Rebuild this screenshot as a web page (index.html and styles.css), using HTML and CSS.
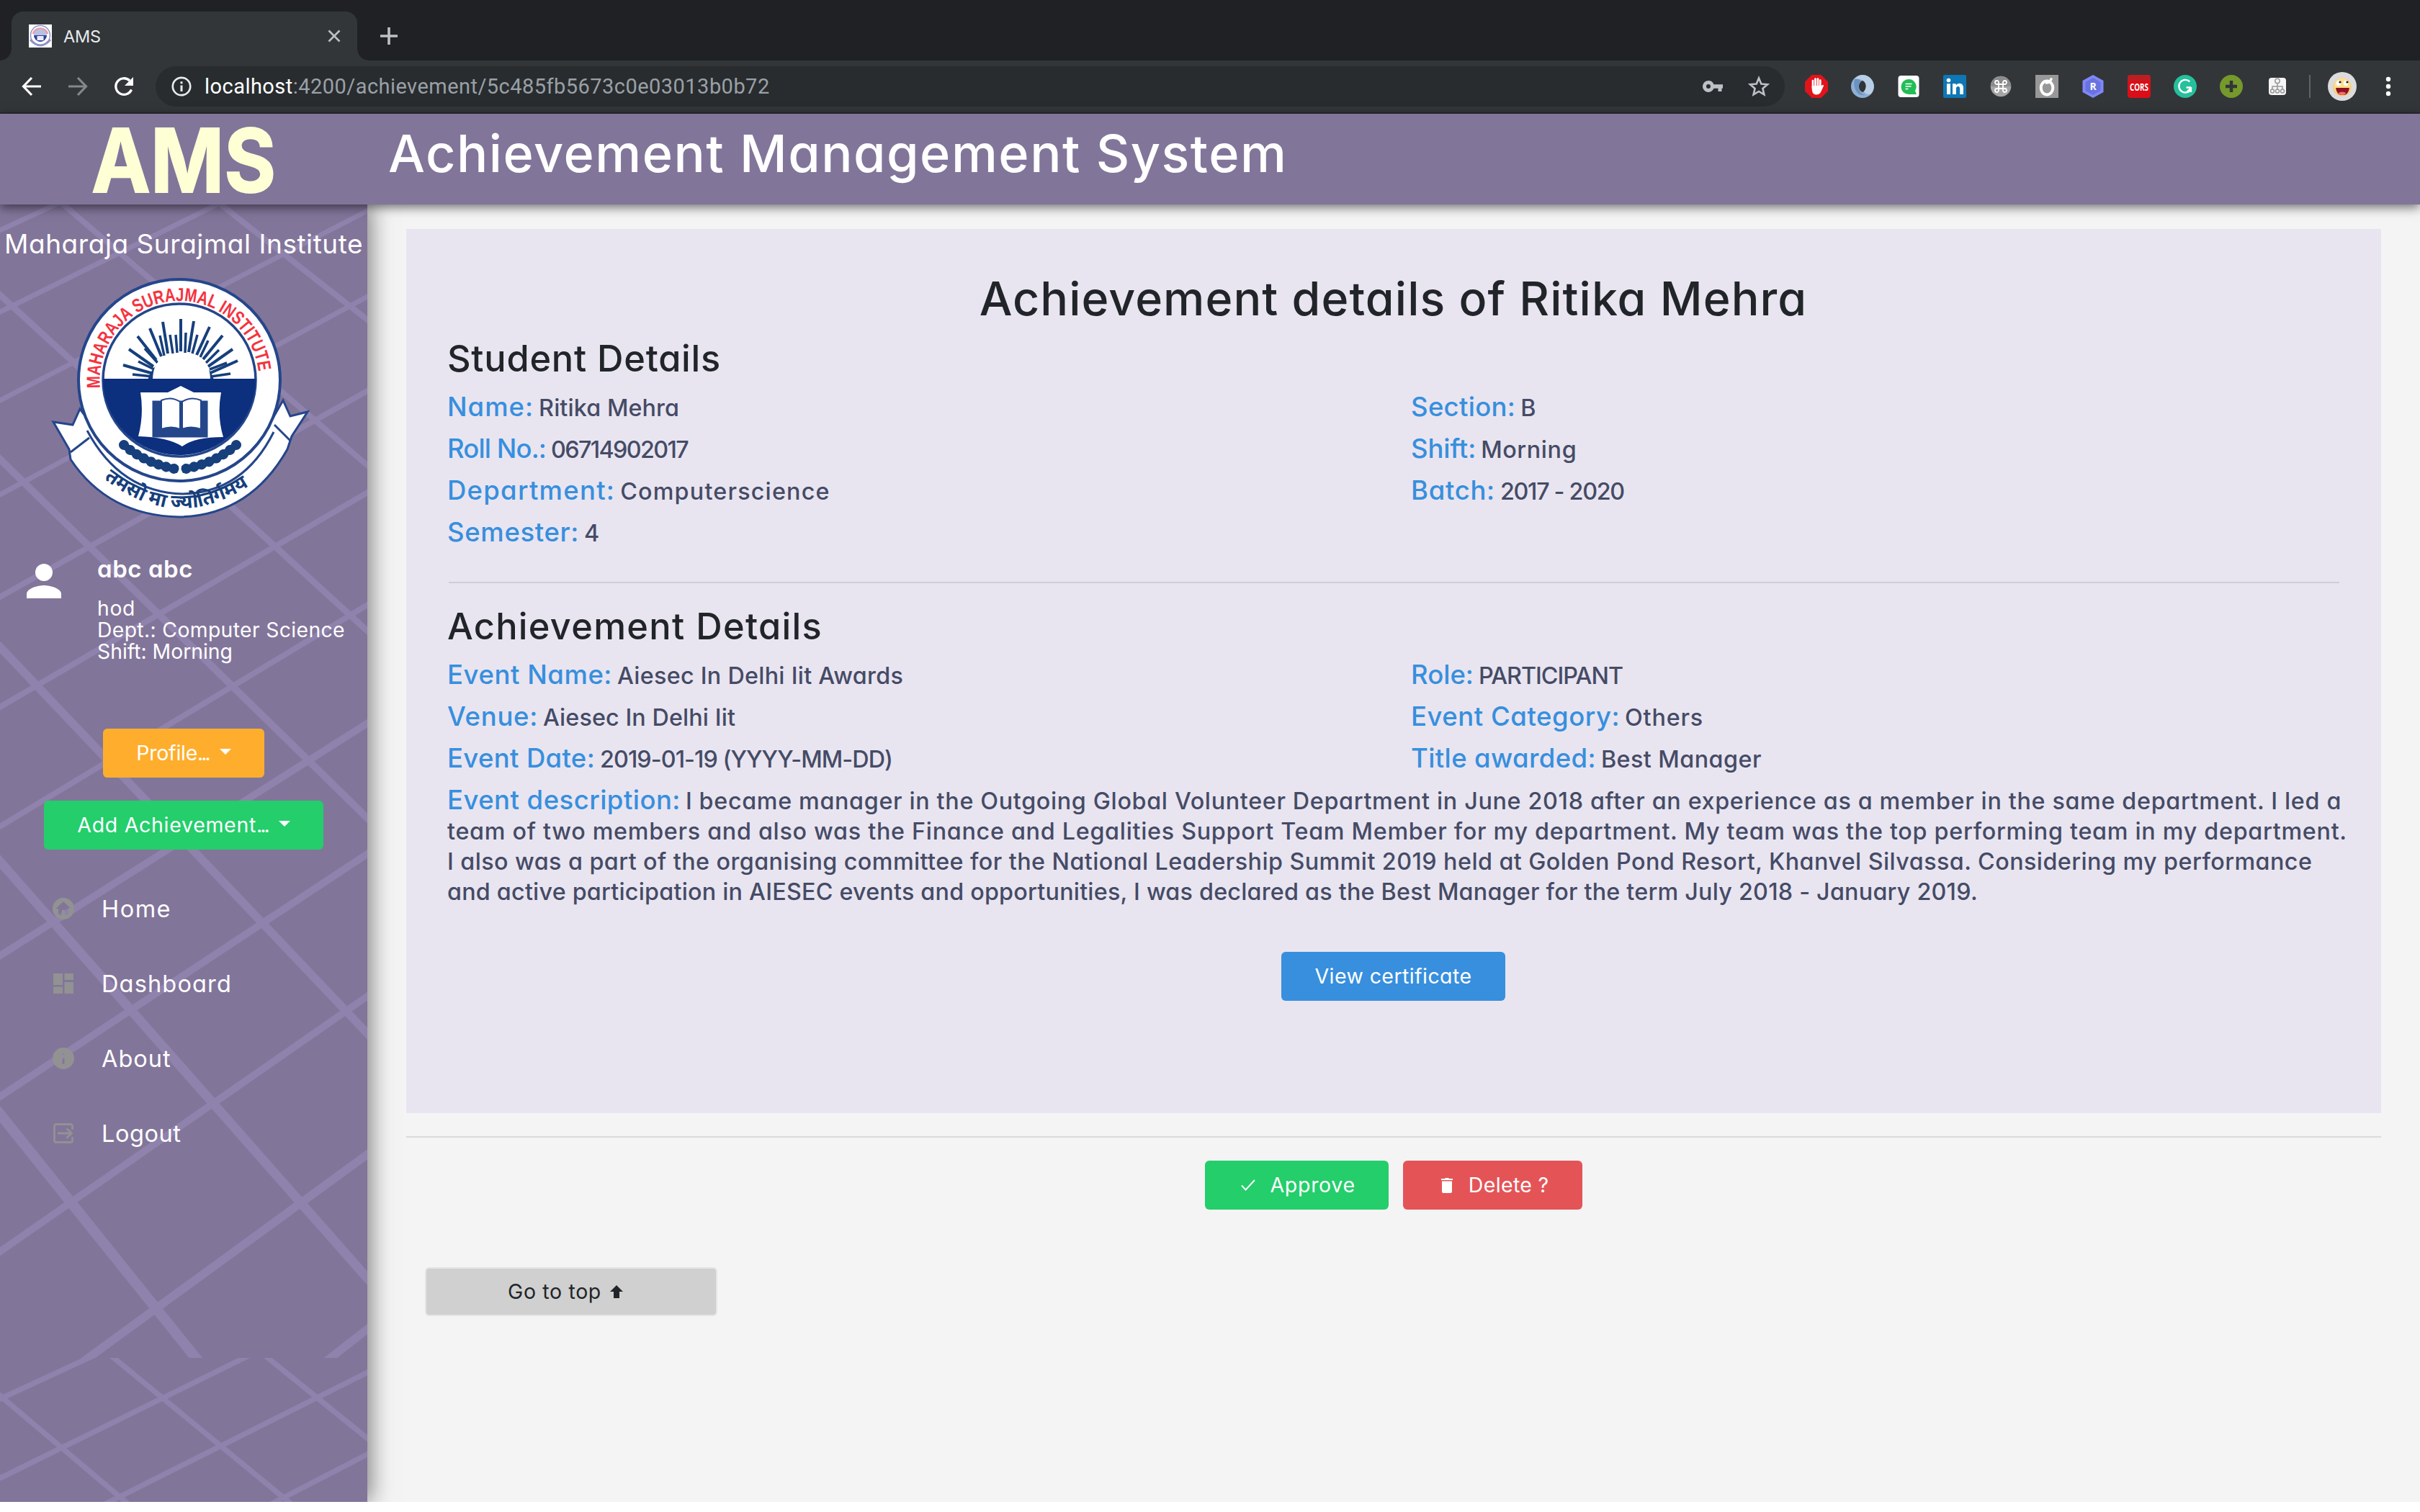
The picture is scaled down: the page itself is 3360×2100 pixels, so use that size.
FILE: index.html
```html
<!DOCTYPE html>
<html lang="en">
<head>
<meta charset="utf-8">
<title>AMS</title>
<link rel="stylesheet" href="styles.css">
</head>
<body>
<div class="tabstrip">
  <div class="tab">
    <svg class="favicon" viewBox="0 0 32 32"><rect width="32" height="32" fill="#fff"/><circle cx="16" cy="15" r="13.500" fill="#fff" stroke="#8f93c4" stroke-width="1.500"/><path d="M6 13a10.500 10.500 0 0 1 20 0" fill="none" stroke="#e99aa5" stroke-width="3"/><circle cx="16" cy="15" r="9" fill="#b9c0e2"/><path d="M7 15h18a9 9 0 0 1-18 0z" fill="#33419a"/><path d="M11.500 16h9v6h-9z" fill="#e8ebf8"/><path d="M2 21q14 16 28 0" fill="none" stroke="#8f93c4" stroke-width="3"/></svg>
    <span class="tab-title">AMS</span>
    <svg class="tab-close" viewBox="0 0 20 20"><path d="M2.500 2.500l15 15M17.500 2.500l-15 15" stroke="#bdc1c6" stroke-width="2.600"/></svg>
  </div>
  <svg class="tab-new" viewBox="0 0 24 24"><path d="M12 0v24M0 12h24" stroke="#bdc1c6" stroke-width="3.600"/></svg>
</div>
<div class="toolbar">
  <svg class="nav-ic" viewBox="0 0 28 28"><path d="M27 14H3M14 2L2.500 14 14 26" fill="none" stroke="#fff" stroke-width="3.200"/></svg>
  <svg class="nav-ic" viewBox="0 0 28 28"><path d="M1 14h24M14 2l11.500 12L14 26" fill="none" stroke="#85888b" stroke-width="3.200"/></svg>
  <svg class="nav-ic" viewBox="0 0 28 28"><path d="M24.500 18.500A11.300 11.300 0 1 1 22 6" fill="none" stroke="#fff" stroke-width="3.300"/><path d="M27 1v12H15z" fill="#fff"/></svg>
  <div class="omnibox">
    <svg class="info-ic" viewBox="0 0 28 28"><circle cx="14" cy="14" r="12.200" fill="none" stroke="#e8eaed" stroke-width="2.700"/><path d="M14 12.500V21M14 7.200v3" stroke="#e8eaed" stroke-width="3"/></svg>
    <span class="url"><b>localhost</b>:4200/achievement/5c485fb5673c0e03013b0b72</span>
    <svg class="key-ic" viewBox="0 0 28 16"><path fill-rule="evenodd" d="M8 0a8 8 0 0 1 7.500 5.300H28v5.400h-1.500V15h-5v-4.300h-6A8 8 0 1 1 8 0zm0 5a3 3 0 1 0 0 6 3 3 0 0 0 0-6z" fill="#bdc1c6"/></svg>
    <svg class="star-ic" viewBox="0 0 30 30"><path d="M15 3.500l3.300 8 8.700.7-6.600 5.700 2 8.500L15 21.900l-7.400 4.500 2-8.500L3 12.200l8.700-.7z" fill="none" stroke="#bdc1c6" stroke-width="2.600"/></svg>
  </div>
  <div class="extensions">
    <svg viewBox="0 0 32 32"><path d="M9.500 0h13L32 9.500v13L22.500 32h-13L0 22.500v-13z" fill="#e1141b"/><path d="M11 18V8M14.500 16V5.500M18 16V5.500M21.300 18V7.500" stroke="#fff" stroke-width="2.700" stroke-linecap="round"/><path d="M9.700 15h13l2.500-1.200q1.300.4.600 2L22 24q-2 3.500-6.500 3.500-5 0-5.800-7z" fill="#fff"/></svg>
    <svg viewBox="0 0 32 32"><path fill-rule="evenodd" d="M16 0a16 16 0 1 1 0 32 16 16 0 0 1 0-32zm0 8c-3 1-5 4-5 8s2 7 5 8c3-1 5-4 5-8s-2-7-5-8z" fill="#8fb0d2"/><path d="M16 0a16 16 0 0 1 12 26q-6 3-10-3 5-7 1-13-6-6-14-4a16 16 0 0 1 11-6z" fill="#b9cfe5"/><path d="M5 6q6-1 9 3-4 3-3 10 1 7 9 9-10 2-14-8-3-8-1-14z" fill="#6a93c0"/></svg>
    <svg viewBox="0 0 32 32"><rect x="1.500" y="1" width="29" height="30" rx="4" fill="#fff"/><path d="M16 6a10.500 10.500 0 0 1 9 16l2 5H16a10.500 10.500 0 0 1 0-21z" fill="#23bd55"/><path d="M11.500 12.500h9M11.500 16h8M11.500 19.500h4" stroke="#fff" stroke-width="1.700"/></svg>
    <svg viewBox="0 0 32 32"><rect width="32" height="32" rx="2" fill="#0e77b5"/><circle cx="7.500" cy="7.500" r="2.800" fill="#fff"/><path d="M5 12.200h5V27H5zM13 12.200h4.700v2q1.700-2.500 4.800-2.500 5.500 0 5.500 6.700V27h-4.800v-7.600q0-3.500-2.600-3.500-2.700 0-2.700 3.500V27H13z" fill="#fff"/></svg>
    <svg viewBox="0 0 32 32"><circle cx="16" cy="16" r="14.300" fill="#a5a5a5"/><path d="M1.700 16a14.300 14.300 0 0 1 28.600 0z" fill="#8c8c8c"/><path d="M13 13h6v6h-6zM13 13h-2.500A2.500 2.500 0 1 1 13 10.500zM19 13v-2.500a2.500 2.500 0 1 1 2.500 2.500zM19 19h2.500a2.500 2.500 0 1 1-2.500 2.500zM13 19v2.500a2.500 2.500 0 1 1-2.500-2.500z" fill="none" stroke="#fff" stroke-width="1.800"/></svg>
    <svg viewBox="0 0 32 32"><rect width="32" height="32" fill="#989898"/><ellipse cx="16" cy="18" rx="8.300" ry="9.500" fill="none" stroke="#fff" stroke-width="4"/><path d="M14 11q6 1 8.500-6.500" fill="none" stroke="#fff" stroke-width="3.400"/></svg>
    <svg viewBox="0 0 32 32"><path d="M16 0l14.500 8v16L16 32 1.500 24V8z" fill="#7f88f5"/><path d="M16 4l10.500 6v12L16 28 5.500 22V10z" fill="#6972e0"/><text x="16" y="21.300" class="ext-text">R</text></svg>
    <svg viewBox="0 0 32 32"><rect width="32" height="32" rx="4" fill="#db0d16"/><path d="M0 8V4a4 4 0 0 1 4-4h24a4 4 0 0 1 4 4v4z" fill="#bb1e22"/><text x="16" y="21.500" class="ext-text" textLength="26" lengthAdjust="spacingAndGlyphs">CORS</text></svg>
    <svg viewBox="0 0 32 32"><circle cx="16" cy="16" r="16" fill="#25c09c"/><path d="M22.300 9.400A8.800 8.800 0 1 0 23.500 20.500M17.500 17.500h6.500M24 17v7M24.500 18l-6 5.500" fill="none" stroke="#fff" stroke-width="2.400"/></svg>
    <svg viewBox="0 0 32 32"><circle cx="16" cy="16" r="16" fill="#76992b"/><path d="M16 8v16M8 16h16" stroke="#323639" stroke-width="4.500"/></svg>
    <svg viewBox="0 0 32 32"><rect x="4" y="4" width="24" height="24" rx="4" fill="#f5f5f5"/><g fill="none" stroke="#989898" stroke-width="1.500"><circle cx="16" cy="8.500" r="3.200"/><path d="M16 12v9M9 20v-4h14v4"/><circle cx="9" cy="22.500" r="2.500"/><circle cx="16" cy="22.500" r="2.500"/><circle cx="23" cy="22.500" r="2.500"/></g></svg>
  </div>
  <div class="divider"></div>
  <svg class="avatar" viewBox="0 0 40 40"><circle cx="20" cy="20" r="20" fill="#dcdbdd"/><circle cx="20" cy="21" r="12.500" fill="#fbc65e"/><circle cx="20" cy="20" r="11.500" fill="#fde08a"/><path d="M11 22h19q-1 10-9.500 10T11 22z" fill="#8e1220"/><path d="M14.500 29q5.500-3 11 0-2 3-5.500 3t-5.500-3z" fill="#f06d7b"/><ellipse cx="15" cy="15.500" rx="3.300" ry="3.800" fill="#fff"/><ellipse cx="25" cy="15.500" rx="3.300" ry="3.800" fill="#fff"/><circle cx="17" cy="14" r="1.600" fill="#222"/><circle cx="27" cy="14" r="1.600" fill="#222"/></svg>
  <svg class="dots" viewBox="0 0 8 28"><g fill="#fff"><circle cx="4" cy="4" r="3.200"/><circle cx="4" cy="14" r="3.200"/><circle cx="4" cy="24" r="3.200"/></g></svg>
</div>

<header class="app-header">
  <div class="brand">
    <svg viewBox="0 0 510 126"><text x="127" y="109" class="brand-text" textLength="256" lengthAdjust="spacingAndGlyphs">AMS</text></svg>
  </div>
  <h1>Achievement Management System</h1>
</header>

<div class="app-body">
  <aside class="sidebar">
    <svg class="pattern" viewBox="0 284 510 1802" preserveAspectRatio="none">
      <defs><clipPath id="tile"><rect x="0" y="284" width="510" height="1602"/></clipPath><clipPath id="tile-next"><rect x="0" y="1886" width="510" height="200"/></clipPath></defs>
      <g clip-path="url(#tile)">
        <g stroke-width="8"><path d="M272 257L562 485M53 254L561 690"/></g>
        <path stroke-width="9" d="M-50 364L560 922"/>
        <path stroke-width="10" d="M-50 589L560 1185"/>
        <path stroke-width="11.500" d="M-50 846L560 1488"/>
        <path stroke-width="13" d="M-50 1140L560 1832"/>
        <path stroke-width="14.500" d="M-50 1485L312 1936"/>
        <g stroke-width="7"><path d="M-50 343L127 261M-50 458L350 260M-50 582L560 267M-50 714L560 385"/></g>
        <g stroke-width="8"><path d="M-50 857L560 515M-50 1011L560 655M-50 1178L560 810"/></g>
        <g stroke-width="10"><path d="M-50 1359L560 973M-50 1556L560 1153M-50 1773L560 1349"/></g>
        <g stroke-width="11.500"><path d="M50 1939L560 1567M400 1932L560 1807"/></g>
      </g>
      <g clip-path="url(#tile-next)" stroke-width="7.500">
        <path d="M-50 1896L210 2116M101 1839L441 2119M310 1836L560 2038M175 1862L-50 1966M400 1856L4 2051L-50 2075M560 1881L100 2112M560 1994L330 2113"/>
      </g>
    </svg>
    <div class="institute ls-55">Maharaja Surajmal Institute</div>
    <svg class="crest" viewBox="60 380 380 344">
      <defs>
        <path id="arc-top" d="M139 539A110.500 110.500 0 1 1 359 539"/>
        <path id="arc-motto" d="M138 660Q250 752 366 660"/>
      </defs>
      <path d="M74 586l27 4 10-22 30 40q100 120 228-10l24-42 10 22 24-6-22 34-6 18q-52 92-150 94Q150 716 98 638l-2-14z" fill="#fff" stroke="#24468b" stroke-width="3"/>
      <circle cx="249" cy="528" r="140" fill="#fff" stroke="#24468b" stroke-width="4"/>
      <path d="M121 598q46 86 133 88 84-2 126-86" fill="none" stroke="#24468b" stroke-width="3"/>
      <path d="M98 628l26-20M381 590l22 22" stroke="#24468b" stroke-width="3"/>
      <circle cx="249" cy="528" r="106" fill="#fff" stroke="#24468b" stroke-width="3.500"/>
      <g stroke="#163f7c" stroke-width="4"><path d="M213 519l-42-12M213 509l-34-24M217 500l-26-33M224 495l-16-39M233 491l-7-44M251 488v-45M262 489l7-43M273 493l18-39M282 499l27-33M289 509l34-24M292 518l38-17"/><path d="M212 523l-28-3M214 513l-22-11M219 504l-18-20M228 494l-6-28M240 491l-4-26M246 490l-2-25M257 490l1-28M267 491l7-26M278 496l11-23M286 504l18-18M291 513l24-9M293 523l27-4" stroke-width="3.500"/></g>
      <path d="M205 528a47 42 0 0 1 92 0z" fill="#163f7c"/>
      <path d="M212 528q0-38 40-38t40 38z" fill="#fff"/>
      <path d="M143 526h212a106 106 0 0 1-212 0z" fill="#0c2f7e"/>
      <path d="M195 545h38l18-9 18 9h38q-6 32 3 62-40 0-57 13-20-13-61-14 8-30 3-61z" fill="#fff"/>
      <path d="M213 558h74v48h-74z" fill="#24468b" stroke="#24468b" stroke-width="3"/>
      <path d="M224 556q14-6 26 2v38q-12-5-26 0zM279 556q-14-6-26 2v38q12-5 26 0z" fill="#fff" stroke="#24468b" stroke-width="2"/>
      <path d="M168 616q40 46 84 42 44 2 80-40-34 20-80 19-50 0-84-21z" fill="#fff"/>
      <path d="M172 618q30 26 75 34M328 618q-30 26-75 34" fill="none" stroke="#163f7c" stroke-width="10"/>
      <path d="M172 618q30 26 75 34M328 618q-30 26-75 34" fill="none" stroke="#163f7c" stroke-width="14" stroke-linecap="round" stroke-dasharray=".1 11"/>
      <text class="crest-name"><textPath href="#arc-top" textLength="345" lengthAdjust="spacingAndGlyphs">MAHARAJA SURAJMAL INSTITUTE</textPath></text>
      <text class="crest-motto"><textPath href="#arc-motto" startOffset="8">तमसो मा ज्योतिर्गमय</textPath></text>
    </svg>
    <div class="user">
      <svg class="user-ic" viewBox="0 0 48 48"><circle cx="24" cy="12" r="12" fill="#fff"/><path d="M0 48V42c0-8 16-12 24-12s24 4 24 12v6z" fill="#fff"/></svg>
      <div>
        <div class="user-name ls-55">abc abc</div>
        <div class="user-info"><span class="ls-65">hod</span><br><span class="ls-37">Dept.: Computer Science</span><br><span>Shift: Morning</span></div>
      </div>
    </div>
    <div class="side-actions">
      <button class="btn btn-orange"><span class="ls-n25">Profile<span class="ellipsis">...</span></span><i class="caret"></i></button>
      <button class="btn btn-green"><span class="ls-70">Add Achievement<span class="ellipsis">...</span></span><i class="caret"></i></button>
    </div>
    <nav>
      <a><svg viewBox="0 0 30 30"><path fill-rule="evenodd" d="M15 0a15 15 0 1 1 0 30 15 15 0 0 1 0-30zm0 5L4.500 15H8v9h5v-7h4v7h5v-9h3.500z" fill="#929292"/></svg><span class="ls-150">Home</span></a>
      <a><svg viewBox="0 0 30 30"><path d="M1 1h13v16H1zM16.500 1H29v9H16.500zM1 19.500h13V29H1zM16.500 13H29v16H16.500z" fill="#929292"/></svg><span class="ls-115">Dashboard</span></a>
      <a><svg viewBox="0 0 30 30"><path fill-rule="evenodd" d="M15 0a15 15 0 1 1 0 30 15 15 0 0 1 0-30zm-1.500 7.500v3h3v-3zm0 6v9h3v-9z" fill="#929292"/></svg><span class="ls-100">About</span></a>
      <a><svg viewBox="0 0 30 30"><path d="M27.500 10V5a2.500 2.500 0 0 0-2.500-2.500H5A2.500 2.500 0 0 0 2.500 5v20A2.500 2.500 0 0 0 5 27.500h20a2.500 2.500 0 0 0 2.500-2.500v-5M7 15h19M19.500 8.500L26.500 15l-7 6.500" fill="none" stroke="#929292" stroke-width="2.800"/></svg><span class="ls-55">Logout</span></a>
    </nav>
  </aside>

  <main>
    <section class="card">
      <h2>Achievement details of Ritika Mehra</h2>
      <h3 class="ls-75">Student Details</h3>
      <div class="fields">
        <div><b class="ls-100">Name:</b><span class="ls-10">Ritika Mehra</span></div>
        <div><b class="ls-30">Section:</b><span>B</span></div>
        <div><b class="ls-n90">Roll No.:</b><span class="ls-n164">06714902017</span></div>
        <div><b class="ls-n10">Shift:</b><span class="ls-60">Morning</span></div>
        <div><b class="ls-125">Department:</b><span class="ls-120">Computerscience</span></div>
        <div><b class="ls-70">Batch:</b><span class="ls-n130">2017 - 2020</span></div>
        <div><b class="ls-65">Semester:</b><span>4</span></div>
      </div>
      <hr>
      <h3 class="ls-130">Achievement Details</h3>
      <div class="fields">
        <div><b class="ls-55">Event Name:</b><span class="ls-28">Aiesec In Delhi Iit Awards</span></div>
        <div><b>Role:</b><span class="ls-n100">PARTICIPANT</span></div>
        <div><b class="ls-70">Venue:</b><span class="ls-10">Aiesec In Delhi Iit</span></div>
        <div><b class="ls-53">Event Category:</b><span class="ls-80">Others</span></div>
        <div><b class="ls-34">Event Date:</b><span class="ls-n95">2019-01-19 (YYYY-MM-DD)</span></div>
        <div><b class="ls-37">Title awarded:</b><span class="ls-46">Best Manager</span></div>
      </div>
      <p class="desc"><b class="ls-46">Event description:</b><span class="ls-66">I became manager in the Outgoing Global Volunteer Department in June 2018 after an experience as a member in the same department. I led a</span><br>
        <span class="ls-71">team of two members and also was the Finance and Legalities Support Team Member for my department. My team was the top performing team in my department.</span><br>
        <span class="ls-43">I also was a part of the organising committee for the National Leadership Summit 2019 held at Golden Pond Resort, Khanvel Silvassa. Considering my performance</span><br>
        <span class="ls-22">and active participation in AIESEC events and opportunities, I was declared as the Best Manager for the term July 2018 - January 2019.</span></p>
      <button class="btn btn-blue"><span class="ls-43">View certificate</span></button>
    </section>
    <hr class="page-rule">
    <div class="actions">
      <button class="btn btn-green"><svg viewBox="0 0 20 20"><path d="M1 10.500l5.500 6L19 3" fill="none" stroke="#fff" stroke-width="1.900"/></svg><span class="ls-70">Approve</span></button>
      <button class="btn btn-red"><svg class="trash" viewBox="0 0 16 21"><path d="M0 1h5l1-1h4l1 1h5v2H0zM1 4.500h14V19a2 2 0 0 1-2 2H3a2 2 0 0 1-2-2z" fill="#fff"/></svg><span class="ls-34">Delete ?</span></button>
    </div>
    <button class="btn go-top"><span class="ls-65">Go to top</span><svg viewBox="0 0 18 18"><path d="M9 0l9 9h-5v9H5V9H0z" fill="#212529"/></svg></button>
  </main>
</div>
</body>
</html>
```
FILE: styles.css
```css
* { box-sizing: border-box; }

body {
  margin: 0;
  height: 2100px;
  overflow: hidden;
  background: #fff;
  font-family: Inter, "Liberation Sans", sans-serif;
  font-feature-settings: "cv11";
  color: #212529;
}

svg { display: block; flex: none; overflow: visible; }
h1, h2, h3, p, hr { margin: 0; }

/* browser chrome */
.tabstrip {
  height: 84px;
  background: #202124;
  display: flex;
  align-items: center;
  padding: 16px 0 0 16px;
  font-feature-settings: normal;
}
.tab {
  position: relative;
  width: 480px;
  height: 68px;
  background: #323639;
  border-radius: 16px 16px 0 0;
  display: flex;
  align-items: center;
  padding: 0 22px 0 24px;
}
.tab::before, .tab::after {
  content: "";
  position: absolute;
  bottom: 0;
  width: 16px;
  height: 16px;
}
.tab::before { left: -16px; background: radial-gradient(circle at 0 0, transparent 15.5px, #323639 16px); }
.tab::after { right: -16px; background: radial-gradient(circle at 100% 0, transparent 15.5px, #323639 16px); }
.favicon { width: 32px; height: 32px; }
.tab-title { flex: 1; margin-left: 16px; font-size: 23.5px; letter-spacing: -.2px; color: #e8eaed; }
.tab-close { width: 20px; height: 20px; }
.tab-new { width: 24px; height: 24px; margin-left: 32px; }

.toolbar {
  height: 74px;
  background: #323639;
  border-bottom: 2px solid #28292c;
  display: flex;
  align-items: center;
  padding-left: 30px;
}
.nav-ic { width: 28px; height: 28px; margin-right: 36px; }
.omnibox {
  width: 2262px;
  height: 56px;
  margin-left: -6px;
  border-radius: 28px;
  background: #282c2f;
  display: flex;
  align-items: center;
  padding: 0 21px 0 22px;
}
.info-ic { width: 28px; height: 28px; }
.url { flex: 1; margin-left: 18px; font-family: Roboto, sans-serif; font-size: 29px; letter-spacing: .46px; color: #9aa0a6; }
.url b { font-weight: 400; color: #fff; }
.key-ic { width: 28px; height: 16px; margin-right: 35px; }
.star-ic { width: 30px; height: 30px; }
.extensions { display: flex; gap: 32px; margin-left: 28px; }
.extensions svg { width: 32px; height: 32px; }
.ext-text { font: 700 14px "Open Sans", sans-serif; fill: #fff; text-anchor: middle; }
.divider { width: 2px; height: 32px; margin: 0 24px 0 28px; background: #5f6368; }
.avatar { width: 40px; height: 40px; }
.dots { width: 8px; height: 28px; margin-left: 40px; }

/* application header */
.app-header {
  position: relative;
  z-index: 2;
  height: 126px;
  background: #82759a;
  display: flex;
  box-shadow: 0 4px 14px rgba(0, 0, 0, .55);
}
.brand { width: 510px; flex: none; }
.brand-text { font: 700 122px Inter, sans-serif; fill: #ffffd6; stroke: #ffffd6; stroke-width: 2; }
h1 { margin-left: 29px; font-size: 72px; line-height: 109px; font-weight: 500; letter-spacing: 1.5px; color: #fff; white-space: nowrap; }

.app-body { height: 1802px; display: flex; background: #f4f4f4; overflow: hidden; }

/* sidebar */
.sidebar {
  position: relative;
  z-index: 1;
  width: 510px;
  flex: none;
  background: #82759a;
  padding-top: 30px;
  color: #fff;
  box-shadow: 4px 0 30px rgba(0, 0, 0, .5);
  display: flex;
  flex-direction: column;
}
.sidebar > * { position: relative; }
.sidebar > .pattern { position: absolute; inset: 0; width: 510px; height: 1802px; overflow: hidden; fill: none; stroke: #8f82ac; }
.institute { padding-left: 6px; font-size: 37px; line-height: 50px; white-space: nowrap; }
.crest { width: 380px; height: 344px; margin: 16px 0 0 60px; }
.crest-name { font: 700 26px "Liberation Sans", sans-serif; fill: #f5333f; }
.crest-motto { font: 700 27px "Noto Sans", sans-serif; fill: #163f7c; }
.user { display: flex; margin: 46px 0 0 37px; }
.user-ic { width: 48px; height: 48px; margin: 13px 50px 0 0; }
.user-name { font-size: 33px; line-height: 40px; font-weight: 600; }
.user-info { margin-top: 20px; font-size: 28.3px; line-height: 30px; white-space: nowrap; }
.side-actions { margin-top: 92px; display: flex; flex-direction: column; align-items: center; gap: 32px; }

.btn {
  height: 68px;
  border: 0;
  border-radius: 6px;
  padding: 0 46px;
  display: flex;
  align-items: center;
  justify-content: center;
  font: inherit;
  font-feature-settings: inherit;
  font-size: 28.5px;
  line-height: 68px;
  color: #fff;
  white-space: nowrap;
}
.btn-orange { background: #feae2c; }
.btn-green { background: #23ce6b; }
.btn-blue { background: #378fde; }
.btn-red { background: #e45457; }
.ellipsis { letter-spacing: -3px; }
.caret { border: 8px solid transparent; border-top-color: #fff; border-bottom: 0; margin: -4px 0 0 15px; }

nav { margin-top: 30px; }
nav a { display: flex; align-items: center; height: 104px; padding-left: 73px; font-size: 32.5px; }
nav svg { width: 30px; height: 30px; margin-right: 38px; }

/* content */
main { flex: 1; min-width: 0; padding: 34px 54px 0; }
.card { height: 1228px; padding: 57px 58px 0 57px; background: #e9e5f0; }
h2 { font-size: 64.5px; line-height: 80px; font-weight: 500; letter-spacing: 1.07px; text-align: center; white-space: nowrap; }
h3 { margin-top: 13px; font-size: 50.5px; line-height: 60px; font-weight: 500; }
hr + h3 { margin-top: 30px; }
.fields { margin-top: 8px; display: grid; grid-template-columns: 1338px 1fr; grid-auto-rows: 58px; line-height: 58px; font-size: 36.5px; white-space: nowrap; }
.fields b, .desc b { font-weight: 500; font-size: 36.5px; color: #378fde; margin-right: 7px; display: inline-block; }
.fields span { font-size: 32.3px; line-height: 1; font-weight: 500; color: #454b66; }
hr { height: 2px; border: 0; margin-top: 40px; background: #d1cdd8; }
.card hr { margin-left: 2px; }
.desc { margin-top: 10px; font-size: 32.3px; line-height: 42px; font-weight: 500; color: #454b66; white-space: nowrap; }
.desc b { line-height: 1; }
.btn-blue { margin: 62px auto 0; }
.page-rule { margin-top: 32px; background: #dadada; }
.actions { margin-top: 32px; display: flex; justify-content: center; gap: 20px; }
.actions svg { width: 20px; height: 20px; margin: 0 20px 0 4px; }
.actions .trash { width: 16px; height: 21px; margin: 0 22px 0 7px; }
.go-top { width: 406px; margin: 80px 0 0 26px; padding: 0 16px 0 0; background: #d0d0d0; border: 2px solid #e5e5e5; color: #212529; line-height: 64px; }
.go-top svg { width: 18px; height: 18px; margin-left: 12px; }

/* tracking, in hundredths of a pixel */
.ls-n164 { letter-spacing: -1.64px; }
.ls-n130 { letter-spacing: -1.3px; }
.ls-n100 { letter-spacing: -1px; }
.ls-n95 { letter-spacing: -.95px; }
.ls-n90 { letter-spacing: -.9px; }
.ls-n25 { letter-spacing: -.25px; }
.ls-n10 { letter-spacing: -.1px; }
.ls-10 { letter-spacing: .1px; }
.ls-22 { letter-spacing: .22px; }
.ls-28 { letter-spacing: .28px; }
.ls-30 { letter-spacing: .3px; }
.ls-34 { letter-spacing: .34px; }
.ls-37 { letter-spacing: .37px; }
.ls-43 { letter-spacing: .43px; }
.ls-46 { letter-spacing: .46px; }
.ls-53 { letter-spacing: .53px; }
.ls-55 { letter-spacing: .55px; }
.ls-60 { letter-spacing: .6px; }
.ls-65 { letter-spacing: .65px; }
.ls-66 { letter-spacing: .66px; }
.ls-70 { letter-spacing: .7px; }
.ls-71 { letter-spacing: .71px; }
.ls-75 { letter-spacing: .75px; }
.ls-80 { letter-spacing: .8px; }
.ls-100 { letter-spacing: 1px; }
.ls-115 { letter-spacing: 1.15px; }
.ls-120 { letter-spacing: 1.2px; }
.ls-125 { letter-spacing: 1.25px; }
.ls-130 { letter-spacing: 1.3px; }
.ls-150 { letter-spacing: 1.5px; }
.user-info .ellipsis, .btn .ellipsis { letter-spacing: -3px; }
```
